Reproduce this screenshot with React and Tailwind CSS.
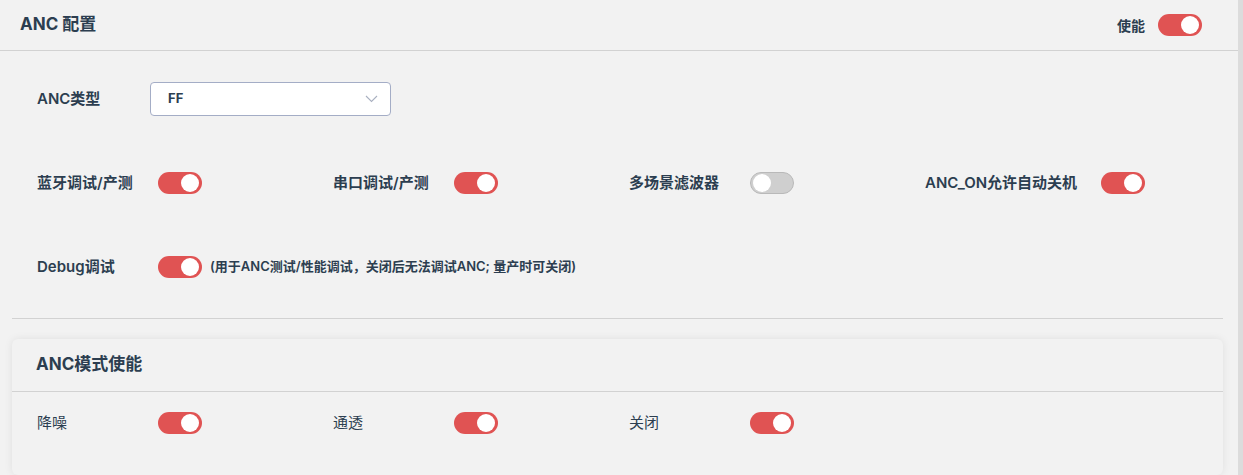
import React from "react";

const font = { fontFamily: '"Inter", "Noto Sans CJK SC", sans-serif' };

function Toggle({ on = true }) {
  return on ? (
    <div className="relative w-[44px] h-[22px] rounded-full bg-[#e05353] shrink-0">
      <div className="absolute right-[3px] top-[2px] w-[18px] h-[18px] rounded-full bg-white" />
    </div>
  ) : (
    <div className="relative w-[44px] h-[22px] rounded-full bg-[#cfcfcf] border border-[#b9b9b9] shrink-0">
      <div className="absolute left-[2px] top-[1px] w-[18px] h-[18px] rounded-full bg-white" />
    </div>
  );
}

function Item({ label, on = true, bold = true }) {
  return (
    <div className="flex items-center">
      <div
        className={`min-w-[121px] pr-[24px] text-[15px] text-[#2c3e50] whitespace-nowrap ${
          bold ? "font-semibold" : "font-normal"
        }`}
      >
        {label}
      </div>
      <Toggle on={on} />
    </div>
  );
}

export default function App() {
  return (
    <div className="w-[1243px] h-[475px] bg-[#f2f2f2] flex overflow-hidden" style={font}>
      <div className="w-[1238px] flex flex-col">
        <div className="h-[51px] border-b border-[#d2d2d2] flex items-center justify-between pl-5 pr-[36px] shrink-0">
          <div className="text-[17px] font-bold text-[#2c3e50]">ANC 配置</div>
          <div className="flex items-center gap-[13px]">
            <span className="text-[14px] font-semibold text-[#2c3e50]">使能</span>
            <Toggle />
          </div>
        </div>

        <div className="pl-[37px] pt-[31px] flex items-center">
          <div className="w-[113px] text-[15px] font-semibold text-[#2c3e50]">ANC类型</div>
          <div className="w-[241px] h-[34px] bg-white border border-[#a4adc6] rounded-[4px] flex items-center justify-between pl-[17px] pr-[12px]">
            <span className="text-[13px] font-bold text-[#2c3e50]">FF</span>
            <svg width="13" height="8" viewBox="0 0 13 8" fill="none">
              <path d="M1 1L6.5 6.5L12 1" stroke="#a9b0c0" strokeWidth="1.1" />
            </svg>
          </div>
        </div>

        <div className="pl-[37px] mt-[56px] grid grid-cols-[296px_296px_296px_1fr] h-[22px]">
          <Item label="蓝牙调试/产测" />
          <Item label="串口调试/产测" />
          <Item label="多场景滤波器" on={false} />
          <Item label="ANC_ON允许自动关机" />
        </div>

        <div className="pl-[37px] mt-[62px] flex items-center h-[22px]">
          <div className="min-w-[121px] pr-[19px] text-[15px] font-semibold text-[#2c3e50]">Debug调试</div>
          <Toggle />
          <span className="ml-[8px] text-[13px] font-semibold text-[#2c3e50] whitespace-nowrap">
            (用于ANC测试/性能调试，关闭后无法调试ANC; 量产时可关闭)
          </span>
        </div>

        <div className="ml-3 mr-[15px] mt-[40px] border-t border-[#d2d2d2]" />

        <div className="ml-3 mr-[15px] mt-[20px] bg-[#f2f2f2] rounded-[6px] shadow-[0_0_8px_rgba(0,0,0,0.08)] flex-1">
          <div className="h-[53px] border-b border-[#d2d2d2] flex items-center pl-[24px]">
            <div className="text-[17px] font-bold text-[#2c3e50]">ANC模式使能</div>
          </div>
          <div className="pl-[25px] pt-[20px] grid grid-cols-[296px_296px_296px_1fr] h-[22px] box-content">
            <Item label="降噪" bold={false} />
            <Item label="通透" bold={false} />
            <Item label="关闭" bold={false} />
          </div>
        </div>
      </div>
      <div className="w-[5px] bg-[#dcdcdc]" />
    </div>
  );
}
